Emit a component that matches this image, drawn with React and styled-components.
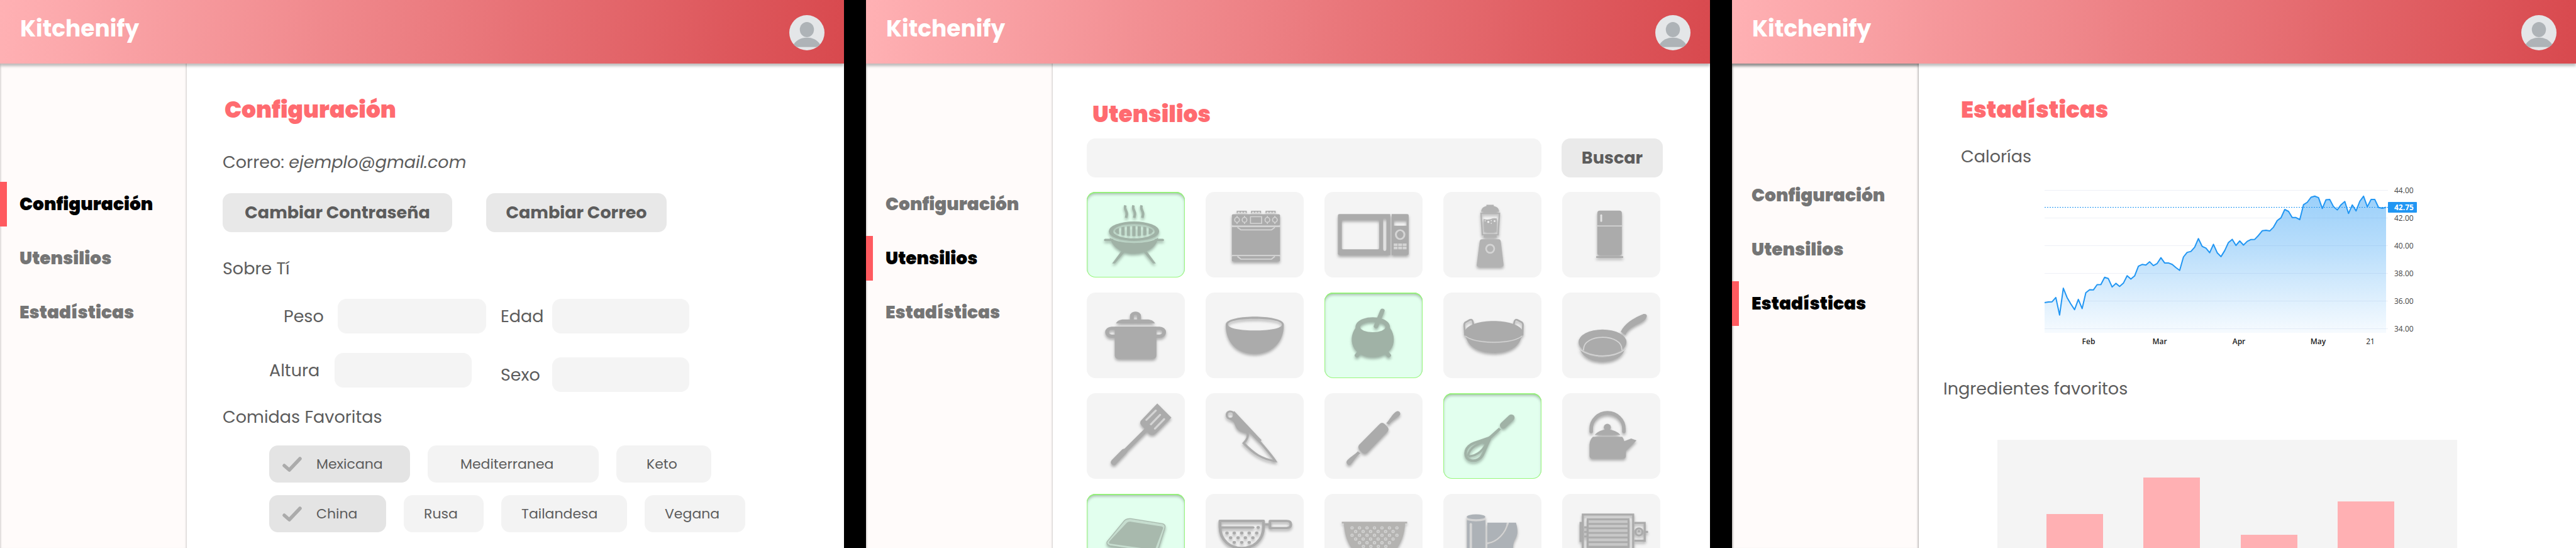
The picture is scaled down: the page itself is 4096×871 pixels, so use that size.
import React from 'react';
import styled, { createGlobalStyle, css } from 'styled-components';

const GlobalStyle = createGlobalStyle`
  *, *::before, *::after { box-sizing: border-box; }
  body { margin: 0; background: #000; font-family: Poppins, Inter, "Liberation Sans", sans-serif; }
  button, input { font: inherit; color: inherit; border: 0; padding: 0; margin: 0; }
`;

/* ---------- shell ---------- */

const Board = styled.div`
  display: grid;
  grid-template-columns: repeat(3, 1fr);
  gap: 35px;
  height: 100vh;
  overflow: hidden;
  background: #000;
`;

const Screen = styled.section`
  display: flex;
  flex-direction: column;
  min-width: 0;
  min-height: 0;
  overflow: hidden;
  background: #fff;
  color: #5c5c5c;
`;

const Header = styled.header`
  display: flex;
  flex: none;
  align-items: flex-start;
  justify-content: space-between;
  padding: 24px 31px 21px 32px;
  background: linear-gradient(97deg, #ffb1b4, #d8494e);
  box-shadow: 0 4px 4px rgba(0, 0, 0, 0.25);
  position: relative;
  z-index: 1;
`;

const Brand = styled.a`
  color: #fff;
  font-size: 36px;
  line-height: 44px;
  font-weight: 700;
  text-decoration: none;
`;

const AvatarButton = styled.button`
  width: 56px;
  height: 56px;
  border-radius: 50%;
  background: none;
  svg { display: block; width: 100%; height: 100%; }
`;

const Body = styled.div`
  display: grid;
  grid-template-columns: 297px 1fr;
  flex: 1;
  min-height: 0;
`;

const Sidebar = styled.nav`
  display: flex;
  flex-direction: column;
  gap: 15px;
  padding-top: ${(p) => p.$top}px;
  background: #fffbfa;
  box-shadow: inset 3px 0 3px -2px rgba(0, 0, 0, 0.2), inset -3px 0 3px -2px rgba(0, 0, 0, 0.2)${(p) => p.$sunken && ', inset 0 4px 4px rgba(0, 0, 0, 0.25)'};
`;

const NavLink = styled.a`
  display: flex;
  align-items: center;
  height: 71px;
  padding-left: 20px;
  border-left: 11px solid ${(p) => (p.$active ? '#ff5a5f' : 'transparent')};
  color: ${(p) => (p.$active ? '#000' : '#757575')};
  font-size: 28px;
  font-weight: 900;
  text-decoration: none;
`;

const Main = styled.main`
  display: flex;
  flex-direction: column;
  min-width: 0;
  padding: ${(p) => p.$pad};
`;

const Title = styled.h1`
  margin: 0 0 ${(p) => p.$after}px ${(p) => p.$indent || 0}px;
  color: #ff6b70;
  font-size: 36px;
  line-height: 50px;
  font-weight: 900;
`;

const Text = styled.p`
  margin: 0 0 ${(p) => p.$after}px ${(p) => p.$indent || 0}px;
  font-size: 27px;
  line-height: 42px;
  font-weight: 400;
`;

const SubTitle = styled(Text).attrs({ as: 'h2' })``;

/* ---------- settings ---------- */

const ButtonRow = styled.div`
  display: flex;
  gap: 54px;
  margin-bottom: 37px;
`;

const ActionButton = styled.button`
  width: ${(p) => p.$width}px;
  height: 62px;
  border-radius: 14px;
  background: ${(p) => p.$tone || '#e8e8e8'};
  font-size: 27px;
  font-weight: 700;
`;

const Fields = styled.div`
  display: flex;
  gap: 23px;
  margin: 0 0 19px 74px;
`;

const FieldColumn = styled.div`
  display: flex;
  flex-direction: column;
  gap: ${(p) => p.$gap}px;
  width: 345px;
`;

const Field = styled.label`
  display: flex;
  align-items: center;
  align-self: ${(p) => p.$align || 'flex-start'};
  font-size: 27px;
  line-height: 42px;
`;

const FieldLabel = styled.span`
  width: ${(p) => p.$width}px;
`;

const TextBox = styled.input`
  width: ${(p) => p.$width}px;
  height: 55px;
  padding: 0 16px;
  border-radius: 14px;
  background: #f4f4f4;
`;

const ChipRows = styled.div`
  display: flex;
  flex-direction: column;
  gap: 20px;
  margin-left: 74px;
`;

const ChipRow = styled.div`
  display: flex;
  gap: 28px;
`;

const Chip = styled.label`
  display: flex;
  align-items: center;
  gap: 23px;
  position: relative;
  width: ${(p) => p.$width}px;
  height: 59px;
  padding-left: ${(p) => p.$pad}px;
  border-radius: 14px;
  background: ${(p) => (p.$on ? '#e4e4e4' : '#f3f3f3')};
  font-size: 22px;
  svg { width: 31px; height: 24px; }
`;

const ChipInput = styled.input`
  position: absolute;
  inset: 0;
  width: 100%;
  height: 100%;
  opacity: 0;
`;

/* ---------- utensils ---------- */

const SearchRow = styled.form`
  display: flex;
  gap: 32px;
  margin-bottom: 23px;
`;

const SearchBox = styled.input`
  flex: 1;
  min-width: 0;
  height: 62px;
  padding: 0 20px;
  border-radius: 14px;
  background: #f4f4f4;
  font-size: 27px;
`;

const TileGrid = styled.div`
  display: grid;
  grid-template-columns: repeat(5, 1fr);
  gap: 24px 33px;
  padding-right: 4px;
`;

const Tile = styled.button`
  position: relative;
  height: 136px;
  border-radius: 14px;
  background: #f4f4f4;
  color: #ababab;
  ${(p) => p.$on && css`
    background: #e2ffee;
    color: #a0b2a6;
    box-shadow: inset 0 0 0 1px #98f77c, inset 0 2px 0 #92e87c, inset 0 4px 4px rgba(0, 0, 0, 0.25);
  `}
  svg {
    display: block;
    width: 100%;
    height: 100%;
    filter: drop-shadow(0 3px 2px rgba(0, 0, 0, 0.3));
  }
`;

/* ---------- statistics ---------- */

const LineChart = styled.svg`
  display: block;
  flex: none;
  width: 600px;
  height: 260px;
  margin: 0 0 45px 161px;
  font-family: "Open Sans", "Noto Sans", sans-serif;
  font-size: 12px;
`;

const BarPanel = styled.div`
  display: flex;
  flex: 1;
  align-items: flex-end;
  justify-content: space-between;
  margin: 0 189px 0 86px;
  padding: 0 100px 0 78px;
  background: #f4f4f4;
`;

const Bar = styled.div`
  width: 90px;
  background: #ffb0b3;
`;

/* ---------- drawings ---------- */

const LIGHT = '#d4d4d4';

function Avatar() {
  return (
    <svg viewBox="255 81 189 192" preserveAspectRatio="none" aria-hidden="true">
      <ellipse cx="349.5" cy="177" rx="94.5" ry="96" fill="#e4e6e8" />
      <ellipse cx="349.5" cy="160" rx="38" ry="41" fill="#aeb3b7" />
      <path d="M278 241C295 215 322 204 350 204C378 204 404 215 421 241L405 255H294Z" fill="#aeb3b7" />
    </svg>
  );
}

function Check() {
  return (
    <svg viewBox="0 0 31 24" aria-hidden="true">
      <path d="M3 14L11 21L28 3" fill="none" stroke="#ababab" strokeWidth="5.5" strokeLinecap="round" strokeLinejoin="round" />
    </svg>
  );
}

const line = { fill: 'none', stroke: 'currentColor' };
const light = { fill: 'none', stroke: LIGHT };

const icons = {
  Parrilla: ['71 69 459 459', (
    <>
      {[0, 38, 76].map((x) => (
        <path key={x} d={`M${252 + x} 141C${243 + x} 163 ${263 + x} 172 ${258 + x} 192L${255 + x} 208`} {...line} strokeWidth="12" />
      ))}
      <path fillRule="evenodd" d="M174 280A118 52 0 1 1 410 280A118 52 0 1 1 174 280ZM194 280A98 38 0 1 0 390 280A98 38 0 1 0 194 280Z" />
      <clipPath id="grate"><ellipse cx="292" cy="279" rx="89" ry="27" /></clipPath>
      <path clipPath="url(#grate)" d="M200 250h22v60h-22zM233 250h15v60h-15zM259 250h14v60h-14zM284 250h15v60h-15zM309 250h15v60h-15zM335 250h15v60h-15zM361 250h22v60h-22z" />
      <path d="M178 314C200 335 250 343 292 343C335 343 385 335 405 314C400 365 350 400 292 400C235 400 190 365 178 314Z" />
      <path d="M158 327H190M395 327H426" {...line} strokeWidth="13" strokeLinecap="round" />
      <path d="M232 388L248 392L203 453H190ZM338 392L352 388L394 453H381Z" />
    </>
  )],
  Estufa: ['627 69 459 459', (
    <>
      {[775, 842, 910].map((x) => (
        <path key={x} d={`M${x} 183V173H${x + 42}V183M${x + 14} 173v8M${x + 28} 173v8`} {...line} strokeWidth="5" />
      ))}
      <rect x="750" y="189" width="225" height="60" rx="6" />
      <rect x="750" y="249" width="225" height="9" fill={LIGHT} />
      <rect x="750" y="258" width="225" height="149" />
      <rect x="750" y="407" width="225" height="7" fill={LIGHT} />
      <rect x="750" y="414" width="225" height="28" rx="5" />
      {[774, 809, 916, 951].map((x) => (
        <g key={x} {...light} strokeWidth="5">
          <ellipse cx={x} cy="219" rx="11" ry="13" />
          <path d={`M${x} 197v8M${x} 233v8`} />
        </g>
      ))}
      <rect x="837" y="202" width="52" height="36" {...light} strokeWidth="5" />
      <path d="M776 259L792 273H935L951 259M776 415L792 430H935L951 415" {...light} strokeWidth="6" />
    </>
  )],
  Microondas: ['1184 66 459 459', (
    <>
      <path fillRule="evenodd" d="M1255 185H1492V405H1255Q1247 405 1247 397V193Q1247 185 1255 185ZM1273 216Q1265 216 1265 224V366Q1265 374 1273 374H1432Q1440 374 1440 366V224Q1440 216 1432 216ZM1466 207Q1458 207 1458 219V371Q1458 383 1466 383Q1474 383 1474 371V219Q1474 207 1466 207Z" />
      <path fillRule="evenodd" d="M1498 185H1570Q1578 185 1578 193V397Q1578 405 1570 405H1498ZM1509 218V247H1568V218Z" />
      <ellipse cx="1538" cy="295" rx="20" ry="24" {...light} strokeWidth="9" />
      {[1508, 1529, 1550].map((x) => (
        <path key={x} d={`M${x} 343h18v13h-18zM${x} 360h18v14h-18z`} fill={LIGHT} />
      ))}
    </>
  )],
  Licuadora: ['258 66 528 459', (
    <g color="#b3b3b3" fill="#b3b3b3">
      <path d="M490 135H529V142C548 145 558 157 558 172H462C462 157 472 145 490 142Z" />
      <path d="M461 181H560L553 296H468Z" {...line} strokeWidth="8" />
      <path d="M474 211Q492 217 512 212Q532 204 546 209L544 280H478Z" />
      <path d="M475 298H545V311H475Z" />
      <g fill="#ececec">
        <circle cx="500" cy="227" r="6" /><circle cx="534" cy="223" r="5" />
        <circle cx="483" cy="221" r="3" /><circle cx="516" cy="220" r="3" /><circle cx="516" cy="234" r="3" />
      </g>
      <path d="M466 320H556Q565 320 567 330L582 455Q583 468 570 468H450Q436 468 438 455L454 330Q456 320 466 320Z" />
      <circle cx="510" cy="371" r="22" fill="none" stroke={LIGHT} strokeWidth="9" />
    </g>
  )],
  Refrigerador: ['897 66 528 459', (
    <>
      <path d="M1086 246V180Q1086 166 1100 166H1204Q1218 166 1218 180V246Z" />
      <rect x="1086" y="246" width="132" height="6" fill={LIGHT} />
      <path d="M1086 252H1218V393Q1218 405 1206 405H1098Q1086 405 1086 393Z" />
      <rect x="1080" y="411" width="145" height="9" />
      <rect x="1102" y="187" width="10" height="40" rx="5" fill="#e4e4e4" />
    </>
  )],
  Olla: ['71 606 459 459', (
    <>
      <path d="M208 771C213 758 225 750 245 750H353C372 750 383 757 390 771Z" />
      <path d="M282 750V734C282 711 316 711 316 734V750" {...line} strokeWidth="18" />
      <rect x="166" y="798" width="267" height="42" rx="21" {...line} strokeWidth="18" />
      <path d="M202 789H397V942Q397 962 377 962H222Q202 962 202 942Z" />
    </>
  )],
  Tazon: ['627 621 459 459', (
    <path fillRule="evenodd" d="M721 793C721 736 993 736 993 793C993 895 930 949 857 949C780 949 721 895 721 793ZM732 793C732 835 984 835 984 793C984 752 732 752 732 793Z" />
  )],
  Caldero: ['1184 612 459 459', (
    <>
      <path fillRule="evenodd" d="M1329 802C1325 725 1495 725 1491 802C1515 840 1512 890 1495 915C1475 945 1445 959 1410 959C1375 959 1345 945 1325 915C1305 880 1308 835 1329 802ZM1351 797A59 28 0 1 0 1469 797A59 28 0 1 0 1351 797Z" />
      <path d="M1455 709L1425 793M1347 933L1336 949M1473 933L1485 949" {...line} strokeWidth="21" strokeLinecap="round" />
    </>
  )],
  Wok: ['258 618 528 459', (
    <>
      <path d="M374 825C400 753 655 753 685 825L683 848C640 889 420 889 375 848Z" />
      <path d="M380 857Q415 887 530 889Q645 887 678 855C665 915 600 941 530 941C460 941 395 915 380 857Z" />
      <path d="M375 848L371 800Q368 782 380 776L400 765Q412 760 416 772L420 790M684 848L686 800Q689 782 677 776L656 765Q645 760 641 772L637 790" {...line} strokeWidth="9" />
      <path d="M377 851Q415 883 530 885Q645 883 681 851" {...light} strokeWidth="4" />
    </>
  )],
  Sarten: ['897 618 528 459', (
    <>
      <ellipse cx="1114" cy="884" rx="129" ry="68" />
      <path d="M994 928Q1040 964 1115 965Q1190 962 1232 928C1215 970 1165 988 1115 988C1060 988 1015 970 994 928Z" />
      <path d="M1012 928C1005 835 1225 835 1218 928" {...light} strokeWidth="6" />
      <path d="M990 922Q1040 957 1115 958Q1190 957 1238 922" {...light} strokeWidth="5" />
      <path d="M1212 828C1235 785 1270 760 1335 733C1352 730 1356 742 1350 752C1335 785 1260 790 1237 845Z" />
    </>
  )],
  Espatula: ['71 78 459 459', (
    <>
      <path d="M401 133L467 209L395 292Q380 308 362 296L354 284L263 388L258 397L205 461Q195 468 186 457Q180 447 188 437L238 378L248 375L342 268L325 248Q318 238 324 226Z" />
      <path d="M350 221L394 171M371 245L414 194M390 268L433 217" {...light} strokeWidth="10" strokeLinecap="round" />
    </>
  )],
  Cuchillo: ['627 78 459 459', (
    <>
      <path fillRule="evenodd" d="M762 182C748 162 721 170 721 194C721 216 738 221 752 226C765 235 763 255 775 270C790 287 810 288 822 294L842 278ZM743 181A12 14 0 1 0 743 209A12 14 0 1 0 743 181Z" />
      <path d="M832 282L884 343C915 385 938 415 953 442C890 432 850 400 805 346C823 325 828 310 823 290" {...line} strokeWidth="11" />
      <path d="M757 178L885 334" {...line} strokeWidth="11" />
    </>
  )],
  Rodillo: ['1184 75 459 459', (
    <>
      <path d="M1442 240Q1453 228 1466 240L1478 255Q1488 268 1480 280L1385 393Q1373 405 1360 393L1347 378Q1338 365 1346 352Z" />
      <path d="M1473 236C1490 215 1497 195 1515 177C1530 162 1545 180 1536 193C1520 210 1500 220 1486 243Z" />
      <path d="M1340 386C1325 405 1310 412 1293 432C1280 445 1290 465 1305 458C1320 440 1330 415 1352 397Z" />
    </>
  )],
  Batidor: ['258 75 528 459', (
    <>
      <path d="M580 247L624 206" {...line} strokeWidth="35" strokeLinecap="round" />
      <path d="M557 260L568 270L516 318L503 308Z" />
      <path d="M512 311C475 328 430 336 407 350C367 375 369 425 405 435C435 443 460 425 470 405C482 380 495 345 511 313" {...line} strokeWidth="14" />
      <path d="M498 324C455 340 395 365 391 412M498 324C480 375 450 410 393 414" {...line} strokeWidth="12" />
      <path d="M514 310L478 324L470 346L496 348Z" />
    </>
  )],
  Tetera: ['897 75 528 459', (
    <>
      <path d="M1053 280V265A88 85 0 0 1 1229 265V280" {...line} strokeWidth="19" strokeLinecap="round" />
      <circle cx="1140" cy="258" r="19" />
      <path d="M1072 299Q1095 270 1140 270Q1185 270 1210 299Z" />
      <path d="M1062 309H1220Q1228 318 1231 332L1268 318L1297 328L1240 385V410Q1240 426 1224 426H1060Q1044 426 1044 410V350Q1046 325 1062 309Z" />
    </>
  )],
  Bandeja: ['71 615 459 459', (
    <>
      <path d="M248 757Q258 746 277 748L425 775Q440 780 437 795L400 930L180 893Q160 886 167 870Z" fill="#c6ddcf" stroke="#a8b9ad" strokeWidth="4" />
      <path d="M258 770Q264 763 278 764L422 790Q430 794 428 800L390 915L178 882Q172 876 178 868Z" fill="#a8b9ad" />
    </>
  )],
  Colador: ['627 615 459 459', (
    <>
      <path d="M694 760H898V790C898 945 694 945 694 790Z" {...line} strokeWidth="13" strokeLinejoin="round" />
      <path d="M700 795H849" {...line} strokeWidth="13" strokeLinecap="round" />
      <path d="M904 779H926" {...line} strokeWidth="13" />
      <path d="M928 760H1006Q1026 760 1026 779Q1026 798 1006 798H928Z" {...line} strokeWidth="12" strokeLinejoin="round" />
      {[[873, 795], [727, 825], [761, 825], [796, 825], [831, 825], [866, 825], [744, 850], [779, 850], [813, 850], [848, 850], [761, 875], [796, 875], [831, 875]].map(([x, y]) => (
        <circle key={`${x}-${y}`} cx={x} cy={y} r="8" />
      ))}
    </>
  )],
  Escurridor: ['1184 612 459 459', (
    <>
      <path d="M1265 761H1571V771H1561C1558 850 1530 906 1490 945H1345C1305 906 1278 850 1275 771H1265Z" fill="#b4b3b1" />
      {[[1313, 794, 7], [1330, 814, 6], [1313, 834, 7], [1330, 854, 6], [1348, 874, 5], [1366, 894, 4]].map(([x0, y, n]) =>
        Array.from({ length: n }, (_, i) => (
          <ellipse key={`${y}-${i}`} cx={x0 + i * 35} cy={y} rx="6" ry="7" fill="#c2c2c0" stroke="#d8d8d8" strokeWidth="3" />
        ))
      )}
    </>
  )],
  Latas: ['258 612 528 459', (
    <g fill="#adb2b7">
      <path d="M385 738H484V760H385Z" fill={LIGHT} />
      <ellipse cx="434" cy="735" rx="50" ry="13" />
      <path d="M385 753Q434 766 484 753V940H385Z" />
      <path d="M406 775V940" {...light} strokeWidth="13" strokeLinecap="round" />
      <path d="M495 766H600C590 820 545 865 495 871Z" />
      <path d="M610 766H649C661 810 660 830 641 862C632 880 632 906 632 940H495V882C550 875 600 825 610 766Z" />
      <path d="M605 766C594 822 548 869 495 877" {...light} strokeWidth="7" />
    </g>
  )],
  Grill: ['897 612 528 459', (
    <g {...line} strokeWidth="11">
      <rect x="1008" y="723" width="271" height="220" />
      <rect x="1034" y="748" width="220" height="148" fill="#c8c8c8" />
      <path d="M1034 773H1254M1034 797H1254M1034 821H1254M1034 846H1254M1034 871H1254" strokeWidth="10" />
      <path d="M1285 768H1341V863H1285M1008 768H996V864H1008M1341 816H1359M1015 791H1030M1015 816H1030M1015 840H1030" />
      <circle cx="1310" cy="816" r="19" />
      <path d="M1310 806V818" />
    </g>
  )],
};

const utensils = Object.keys(icons);
const owned = ['Parrilla', 'Caldero', 'Batidor', 'Bandeja'];

/* Daily readings on the chart's own scale: 91 is 44.00, 835 is 34.00. */
const readings = [
  696, 693, 692, 669, 763, 619, 669, 704, 734, 679, 728, 643, 627, 628, 600, 599, 560, 567, 612, 593, 609, 592,
  552, 570, 553, 501, 491, 494, 477, 497, 486, 455, 483, 483, 491, 508, 523, 451, 426, 421, 398, 352, 394, 403,
  428, 383, 428, 449, 417, 373, 356, 389, 365, 387, 367, 357, 356, 335, 310, 307, 311, 291, 255, 240, 196, 206,
  239, 239, 250, 170, 157, 130, 124, 132, 190, 143, 142, 181, 198, 170, 153, 217, 171, 203, 152, 124, 181, 142,
  142, 185, 189, 184,
];

const plotWidth = 543;
const points = readings
  .map((r, i) => {
    const x = (i / (readings.length - 1)) * plotWidth;
    const y = 10 + ((r - 91) / 744) * 220;
    return `${x.toFixed(1)} ${y.toFixed(1)}`;
  })
  .join('L');

function CaloriesChart() {
  return (
    <LineChart viewBox="0 0 600 260" role="img" aria-label="Calorías">
      <defs>
        <linearGradient id="area" x1="0" y1="0" x2="0" y2="1">
          <stop offset="0" stopColor="#2196f3" stopOpacity="0.45" />
          <stop offset="0.4" stopColor="#2196f3" stopOpacity="0.31" />
          <stop offset="1" stopColor="#2196f3" stopOpacity="0.04" />
        </linearGradient>
      </defs>
      {[10, 54, 98, 142, 186, 230].map((y, i) => (
        <g key={y}>
          <path d={`M0 ${y}.5H546`} stroke="#eef0f7" />
          <text x="556" y={y + 5} fill="#444">{`${44 - i * 2}.00`}</text>
        </g>
      ))}
      <path d={`M${points}V237H0Z`} fill="url(#area)" />
      <path d={`M${points}`} fill="none" stroke="#2196f3" strokeWidth="2" strokeLinejoin="round" />
      <path d="M0 37.5H546" stroke="#2196f3" strokeDasharray="2 2" />
      <rect x="546" y="29" width="46" height="17" rx="1" fill="#2196f3" />
      <text x="556" y="42" fill="#fff" fontWeight="700">42.75</text>
      {[['Feb', 70], ['Mar', 183], ['Apr', 309], ['May', 435], ['21', 518]].map(([m, x]) => (
        <text key={m} x={x} y="255" textAnchor="middle" fill="#222" fontWeight={m === '21' ? 400 : 600}>{m}</text>
      ))}
    </LineChart>
  );
}

/* ---------- pages ---------- */

const sections = ['Configuración', 'Utensilios', 'Estadísticas'];

function Page({ active, navTop, sunken, pad, children }) {
  return (
    <Screen>
      <Header>
        <Brand href="#inicio">Kitchenify</Brand>
        <AvatarButton type="button" aria-label="Perfil"><Avatar /></AvatarButton>
      </Header>
      <Body>
        <Sidebar $top={navTop} $sunken={sunken}>
          {sections.map((s) => (
            <NavLink key={s} href={`#${s}`} $active={s === active}>{s}</NavLink>
          ))}
        </Sidebar>
        <Main $pad={pad}>{children}</Main>
      </Body>
    </Screen>
  );
}

const foods = [
  [['Mexicana', 224, true, 21], ['Mediterranea', 272, false, 52], ['Keto', 151, false, 48]],
  [['China', 186, true, 21], ['Rusa', 127, false, 32], ['Tailandesa', 200, false, 32], ['Vegana', 160, false, 32]],
];

function LabeledBox({ label, labelWidth, width, align }) {
  return (
    <Field $align={align}>
      <FieldLabel $width={labelWidth}>{label}</FieldLabel>
      <TextBox type="text" $width={width} />
    </Field>
  );
}

function Settings() {
  return (
    <Page active="Configuración" navTop={188} pad="49px 57px 0">
      <Title $after={37} $indent={3}>Configuración</Title>
      <Text $after={28}>Correo: <em>ejemplo@gmail.com</em></Text>
      <ButtonRow>
        <ActionButton type="button" $width={365}>Cambiar Contraseña</ActionButton>
        <ActionButton type="button" $width={287}>Cambiar Correo</ActionButton>
      </ButtonRow>
      <SubTitle $after={27}>Sobre Tí</SubTitle>
      <Fields>
        <FieldColumn $gap={31}>
          <LabeledBox label="Peso" labelWidth={86} width={236} align="flex-end" />
          <LabeledBox label="Altura" labelWidth={104} width={218} />
        </FieldColumn>
        <FieldColumn $gap={38}>
          <LabeledBox label="Edad" labelWidth={82} width={218} />
          <LabeledBox label="Sexo" labelWidth={82} width={218} />
        </FieldColumn>
      </Fields>
      <SubTitle $after={24}>Comidas Favoritas</SubTitle>
      <ChipRows>
        {foods.map((row) => (
          <ChipRow key={row[0][0]}>
            {row.map(([name, width, on, pad]) => (
              <Chip key={name} $width={width} $on={on} $pad={pad}>
                <ChipInput type="checkbox" defaultChecked={on} />
                {on && <Check />}
                {name}
              </Chip>
            ))}
          </ChipRow>
        ))}
      </ChipRows>
    </Page>
  );
}

function Utensils() {
  return (
    <Page active="Utensilios" navTop={188} pad="56px 75px 0 54px">
      <Title $after={13} $indent={9}>Utensilios</Title>
      <SearchRow>
        <SearchBox type="search" aria-label="Buscar utensilios" />
        <ActionButton type="button" $width={161} $tone="#eaeaea">Buscar</ActionButton>
      </SearchRow>
      <TileGrid>
        {utensils.map((name) => (
          <Tile key={name} type="button" aria-label={name} aria-pressed={owned.includes(name)} $on={owned.includes(name)}>
            <svg viewBox={icons[name][0]} preserveAspectRatio="none" fill="currentColor" aria-hidden="true">
              {icons[name][1]}
            </svg>
          </Tile>
        ))}
      </TileGrid>
    </Page>
  );
}

const favourites = [54, 112, 21, 74];

function Statistics() {
  return (
    <Page active="Estadísticas" navTop={174} sunken pad="49px 0 0 39px">
      <Title $after={28} $indent={28}>Estadísticas</Title>
      <SubTitle $after={22} $indent={28}>Calorías</SubTitle>
      <CaloriesChart />
      <SubTitle $after={60}>Ingredientes favoritos</SubTitle>
      <BarPanel>
        {favourites.map((n) => (
          <Bar key={n} style={{ height: n }} />
        ))}
      </BarPanel>
    </Page>
  );
}

export default function App() {
  return (
    <>
      <GlobalStyle />
      <Board>
        <Settings />
        <Utensils />
        <Statistics />
      </Board>
    </>
  );
}
